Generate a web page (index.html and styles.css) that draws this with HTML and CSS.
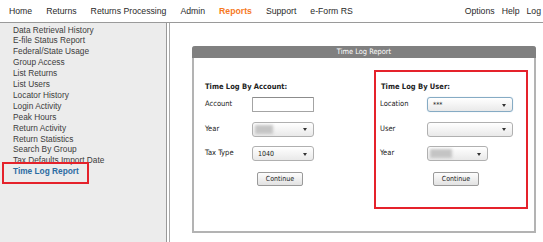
FILE: index.html
```html
<!DOCTYPE html>
<html lang="en">
<head>
    <meta charset="UTF-8">
    <meta name="viewport" content="width=device-width, initial-scale=1.0">
    <title>Time Log Report</title>
    <link rel="stylesheet" href="styles.css">
</head>
<body>
    <div class="top-nav">
        <div class="nav-left">
            <a>Home</a>
            <a>Returns</a>
            <a>Returns Processing</a>
            <a>Admin</a>
            <a class="current">Reports</a>
            <a>Support</a>
            <a>e-Form RS</a>
        </div>
        <div class="nav-right">
            <a>Options</a>
            <a>Help</a>
            <a>Log</a>
        </div>
    </div>

    <div class="layout">
        <!-- Reports menu -->
        <ul class="side-menu">
            <li>Data Retrieval History</li>
            <li>E-file Status Report</li>
            <li>Federal/State Usage</li>
            <li>Group Access</li>
            <li>List Returns</li>
            <li>List Users</li>
            <li>Locator History</li>
            <li>Login Activity</li>
            <li>Peak Hours</li>
            <li>Return Activity</li>
            <li>Return Statistics</li>
            <li>Search By Group</li>
            <li>Tax Defaults Import Date</li>
            <li class="selected">Time Log Report</li>
        </ul>

        <div class="content">
            <div class="panel">
                <div class="panel-title">Time Log Report</div>
                <div class="panel-body">
                    <!-- By account -->
                    <div class="form-block by-account">
                        <div class="block-title">Time Log By Account:</div>
                        <div class="form-grid">
                            <label>Account</label>
                            <input type="text" class="text-field">
                            <label>Year</label>
                            <div class="dropdown"><span class="blurred"></span><span class="caret"></span></div>
                            <label>Tax Type</label>
                            <div class="dropdown"><span>1040</span><span class="caret"></span></div>
                        </div>
                        <button class="continue">Continue</button>
                    </div>

                    <!-- By user -->
                    <div class="form-block by-user">
                        <div class="block-title">Time Log By User:</div>
                        <div class="form-grid">
                            <label>Location</label>
                            <div class="dropdown focused"><span>***</span><span class="caret"></span></div>
                            <label>User</label>
                            <div class="dropdown"><span></span><span class="caret"></span></div>
                            <label>Year</label>
                            <div class="dropdown short"><span class="blurred wide"></span><span class="caret"></span></div>
                        </div>
                        <button class="continue">Continue</button>
                    </div>
                </div>
            </div>
        </div>
    </div>
</body>
</html>
```

FILE: styles.css
```css
body {
    margin: 0;
    font-family: "Liberation Sans", Arial, sans-serif;
    color: #333;
    background: #fff;
    overflow: hidden;
    height: 242px;
}
.top-nav {
    display: flex;
    justify-content: space-between;
    height: 22px;
    line-height: 22px;
    font-size: 8.7px;
    border-bottom: 1px solid #9a9a9a;
    padding: 0 2px 0 9px;
    white-space: nowrap;
}
.nav-left,
.nav-right {
    display: flex;
}
.nav-left {
    gap: 14px;
}
.nav-right {
    gap: 7px;
}
.top-nav a {
    color: #2a2a2a;
}
.top-nav a.current {
    color: #f6791f;
    font-weight: bold;
}
.layout {
    display: flex;
    height: 219px;
}
.side-menu {
    list-style-type: none;
    margin: 0;
    padding: 1.5px 0 0 13px;
    width: 153px;
    background-color: #ececec;
    border-right: 1px solid #999;
    font-size: 8.3px;
    line-height: 10.9px;
    color: #3c3c3c;
}
.side-menu li {
    white-space: nowrap;
}
.side-menu li.selected {
    position: relative;
    font-weight: bold;
    color: #2b6ba2;
}
/* annotation box round the selected item */
.side-menu li.selected::after {
    content: "";
    position: absolute;
    left: -11px;
    top: -4px;
    width: 83px;
    height: 18px;
    border: 2px solid #e5222b;
}
.content {
    flex: 1;
    margin-left: 2px;
    border-left: 1px solid #aaa;
    padding: 23px 0 0 22px;
}
.panel {
    width: 340px;
    border: 2px solid #b3b3b3;
    border-top: 0;
    border-radius: 3px 3px 0 0;
}
.panel-title {
    margin: 0 -2px;
    height: 12px;
    line-height: 12px;
    background-color: #808080;
    border-radius: 3px 3px 0 0;
    color: #fff;
    text-align: center;
    font-family: "DejaVu Sans Condensed", "DejaVu Sans", sans-serif;
    font-size: 7.4px;
}
.panel-body {
    display: flex;
    align-items: flex-start;
    padding: 12px 6px 22px 0;
    font-family: "DejaVu Sans Condensed", "DejaVu Sans", sans-serif;
    font-size: 7.5px;
    color: #222;
}
.form-block {
    box-sizing: border-box;
}
.by-account {
    width: 180px;
    padding: 12px 0 0 11px;
}
.by-user {
    width: 154px;
    padding: 10px 0 21px 4px;
    border: 2px solid #e5222b;
}
.block-title {
    font-weight: bold;
    line-height: 10px;
}
.by-user .block-title {
    padding-left: 1px;
}
.form-grid {
    display: grid;
    grid-template-columns: 47px 62px;
    grid-auto-rows: 15px;
    row-gap: 9.5px;
    margin-top: 5px;
}
.by-user .form-grid {
    grid-template-columns: 47px 86px;
}
.form-grid label {
    line-height: 12px;
    padding-top: 1px;
}
.text-field {
    box-sizing: border-box;
    width: 62px;
    height: 15px;
    margin: 0;
    border: 1px solid #a4a4a4;
    border-top-color: #8c8c8c;
    border-radius: 1px;
    background: #fff;
}
.dropdown {
    box-sizing: border-box;
    display: flex;
    align-items: center;
    justify-content: space-between;
    height: 15px;
    padding: 0 6px 0 5px;
    border: 1px solid #b0b0b0;
    border-radius: 3px;
    background: linear-gradient(#ffffff, #e9e9e9);
    font-size: 7px;
}
.dropdown.short {
    width: 61px;
}
.dropdown.focused {
    border-color: #86abc4;
    box-shadow: 0 0 1px #a9c7db;
}
.caret {
    width: 0;
    height: 0;
    border-left: 2.5px solid transparent;
    border-right: 2.5px solid transparent;
    border-top: 3px solid #333;
    margin-top: 1px;
}
.blurred {
    width: 18px;
    height: 9px;
    margin-left: -3px;
    background: #c4c4c4;
    filter: blur(1.5px);
}
.blurred.wide {
    width: 22px;
}
.continue {
    display: block;
    box-sizing: border-box;
    width: 46px;
    height: 14px;
    margin-top: 11px;
    padding: 0;
    border: 1px solid #9a9a9a;
    border-radius: 2px;
    background: linear-gradient(#fdfdfd, #e2e2e2);
    font-family: "DejaVu Sans Condensed", "DejaVu Sans", sans-serif;
    font-size: 7px;
    color: #222;
}
.by-account .continue {
    margin-left: 52px;
}
.by-user .continue {
    margin-left: 53px;
}
```
